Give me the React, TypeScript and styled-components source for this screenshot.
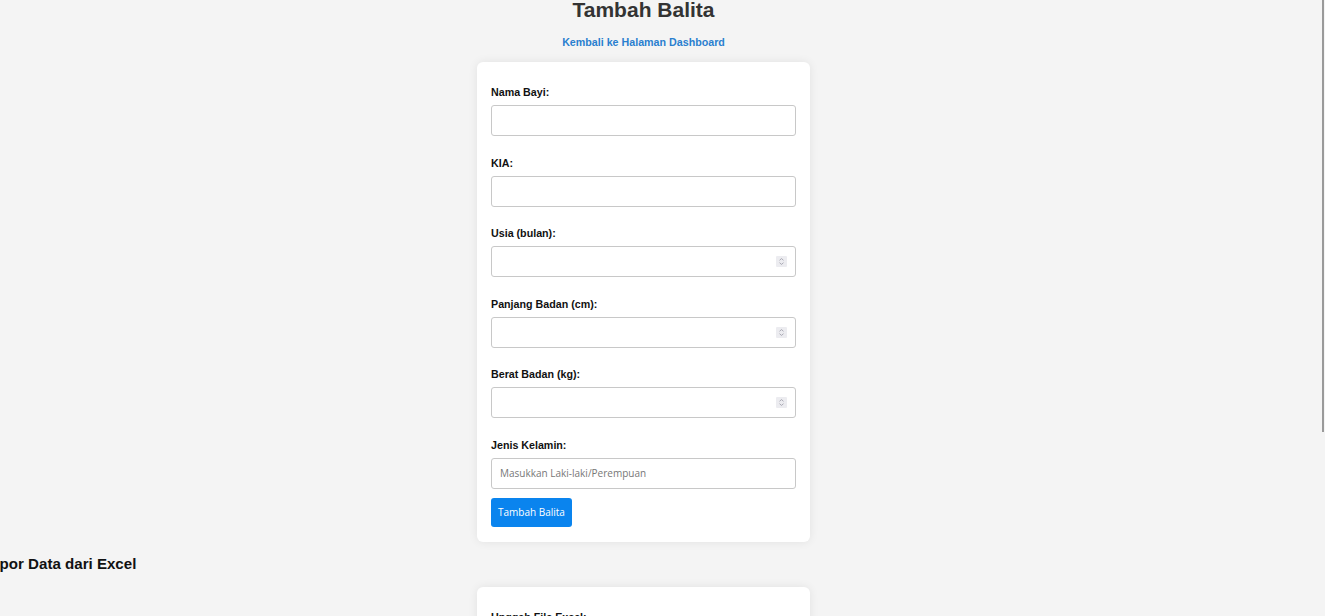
import React from 'react';
import styled, { createGlobalStyle } from 'styled-components';

const GlobalStyle = createGlobalStyle`
  html, body {
    margin: 0;
    padding: 0;
    background: #f4f4f4;
    overflow: hidden;
  }
  body {
    font-family: "Liberation Sans", Arial, sans-serif;
    color: #111;
  }
`;

const Page = styled.div`
  display: flex;
  flex-direction: column;
  align-items: center;
  padding-right: 38px;
  min-height: 100vh;
`;

const Title = styled.h1`
  margin: 0;
  font-size: 21px;
  line-height: 20px;
  font-weight: 700;
  color: #333;
`;

const BackLink = styled.a`
  margin-top: 16px;
  font-size: 10.7px;
  line-height: 13px;
  font-weight: 700;
  color: #2a7fcf;
  text-decoration: none;
`;

const Card = styled.form<{ $top: number }>`
  box-sizing: border-box;
  width: 333px;
  margin-top: ${p => p.$top}px;
  padding: 24px 14px 15px;
  background: #fff;
  border-radius: 6px;
  box-shadow: 0 0 10px rgba(0, 0, 0, 0.08);
  display: flex;
  flex-direction: column;
`;

const Field = styled.div`
  display: flex;
  flex-direction: column;
  margin-bottom: 20.6px;

  &:last-of-type {
    margin-bottom: 9px;
  }
`;

const Label = styled.label`
  font-size: 10.7px;
  line-height: 13px;
  font-weight: 700;
  color: #111;
  margin-bottom: 6px;
`;

const InputWrap = styled.div`
  position: relative;
`;

const Input = styled.input`
  box-sizing: border-box;
  width: 100%;
  height: 31px;
  padding: 0 8px;
  border: 1px solid #c8c8c8;
  border-radius: 3px;
  background: #fff;
  font-family: "Open Sans", "Noto Sans", sans-serif;
  font-size: 10px;
  color: #333;
  outline: none;

  &::placeholder {
    color: #777;
  }

  &::-webkit-inner-spin-button,
  &::-webkit-outer-spin-button {
    -webkit-appearance: none;
    margin: 0;
  }
  -moz-appearance: textfield;
`;

const Spinner = styled.svg`
  position: absolute;
  right: 9px;
  top: 10px;
  width: 11px;
  height: 11px;
  pointer-events: none;
`;

const Button = styled.button`
  align-self: flex-start;
  height: 29px;
  padding: 0 7px;
  border: none;
  border-radius: 3px;
  background: #0a84ee;
  color: #fff;
  font-family: "Open Sans", "Noto Sans", sans-serif;
  font-size: 10px;
  cursor: pointer;
`;

const SectionTitle = styled.h2`
  align-self: flex-start;
  margin: 13px 0 0 -18px;
  font-size: 15.1px;
  line-height: 18px;
  font-weight: 700;
  color: #111;
`;

const ScrollThumb = styled.div`
  position: fixed;
  top: 0;
  right: 1px;
  width: 2px;
  height: 432px;
  background: #9a9a9a;
`;

const SpinIcon = () => (
  <Spinner viewBox="0 0 11 11">
    <rect x="0" y="0" width="11" height="11" rx="1" fill="#ececf0" />
    <path d="M3.5 4.3 L5.5 2.6 L7.5 4.3" fill="none" stroke="#9a9aa6" strokeWidth="0.8" />
    <path d="M3.5 6.7 L5.5 8.4 L7.5 6.7" fill="none" stroke="#9a9aa6" strokeWidth="0.8" />
  </Spinner>
);

interface FieldDef {
  label: string;
  type: 'text' | 'number';
  placeholder?: string;
}

const FIELDS: FieldDef[] = [
  { label: 'Nama Bayi:', type: 'text' },
  { label: 'KIA:', type: 'text' },
  { label: 'Usia (bulan):', type: 'number' },
  { label: 'Panjang Badan (cm):', type: 'number' },
  { label: 'Berat Badan (kg):', type: 'number' },
  { label: 'Jenis Kelamin:', type: 'text', placeholder: 'Masukkan Laki-laki/Perempuan' },
];

const App: React.FC = () => {
  return (
    <>
      <GlobalStyle />
      <Page>
        <Title>Tambah Balita</Title>
        <BackLink href="#">Kembali ke Halaman Dashboard</BackLink>

        <Card $top={13} onSubmit={e => e.preventDefault()}>
          {FIELDS.map(f => (
            <Field key={f.label}>
              <Label>{f.label}</Label>
              <InputWrap>
                <Input type={f.type} placeholder={f.placeholder} />
                {f.type === 'number' && <SpinIcon />}
              </InputWrap>
            </Field>
          ))}
          <Button type="submit">Tambah Balita</Button>
        </Card>

        <SectionTitle>Impor Data dari Excel</SectionTitle>

        <Card $top={14} onSubmit={e => e.preventDefault()}>
          <Field>
            <Label>Unggah File Excel:</Label>
            <Input type="file" />
          </Field>
          <Button type="submit">Impor Data</Button>
        </Card>
      </Page>
      <ScrollThumb />
    </>
  );
};

export default App;
